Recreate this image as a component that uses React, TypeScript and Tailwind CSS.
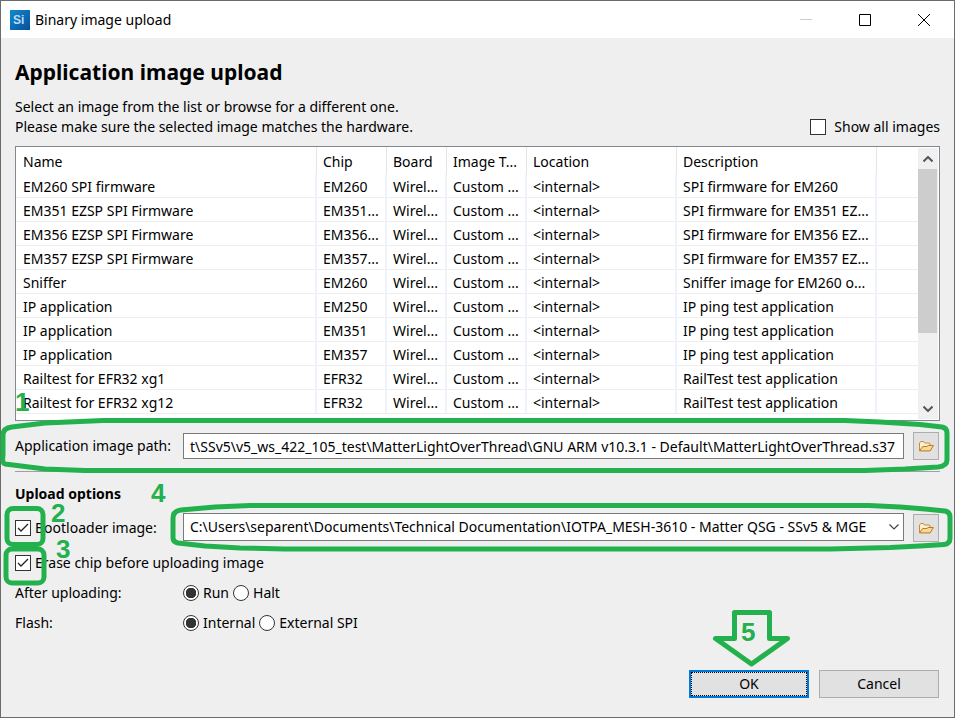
import { useState } from "react";

const columns = ["Name", "Chip", "Board", "Image T...", "Location", "Description"];

const rows = [
  ["EM260 SPI firmware", "EM260", "SPI firmware for EM260"],
  ["EM351 EZSP SPI Firmware", "EM351...", "SPI firmware for EM351 EZ..."],
  ["EM356 EZSP SPI Firmware", "EM356...", "SPI firmware for EM356 EZ..."],
  ["EM357 EZSP SPI Firmware", "EM357...", "SPI firmware for EM357 EZ..."],
  ["Sniffer", "EM260", "Sniffer image for EM260 o..."],
  ["IP application", "EM250", "IP ping test application"],
  ["IP application", "EM351", "IP ping test application"],
  ["IP application", "EM357", "IP ping test application"],
  ["Railtest for EFR32 xg1", "EFR32", "RailTest test application"],
  ["Railtest for EFR32 xg12", "EFR32", "RailTest test application"],
];

function Check({ id, defaultChecked = false }: { id: string; defaultChecked?: boolean }) {
  const [on, setOn] = useState(defaultChecked);
  return (
    <span className="grid size-4 shrink-0">
      <input
        id={id}
        type="checkbox"
        checked={on}
        onChange={() => setOn(!on)}
        className="col-start-1 row-start-1 size-4 appearance-none border border-[#333] bg-white"
      />
      {on && (
        <svg viewBox="0 0 16 16" className="pointer-events-none col-start-1 row-start-1 size-4" fill="none" stroke="#222" strokeWidth="1.3">
          <path d="M3 8l3 3 7-7" />
        </svg>
      )}
    </span>
  );
}

function Radio({ id, name, defaultChecked = false }: { id: string; name: string; defaultChecked?: boolean }) {
  return (
    <input
      id={id}
      name={name}
      type="radio"
      defaultChecked={defaultChecked}
      className="size-4 shrink-0 appearance-none rounded-full border border-[#333] bg-white checked:border-[#333] checked:bg-[radial-gradient(circle,#333_0,#333_5px,#fff_5.5px)]"
    />
  );
}

function FolderButton({ label }: { label: string }) {
  return (
    <button aria-label={label} className="flex h-7 w-[26px] shrink-0 items-center justify-center border border-[#adadad] bg-[#e1e1e1]">
      <svg viewBox="0 0 16 16" className="size-4" strokeLinejoin="round">
        <path d="M1.500 12.500V4.800L3 3.500h2.500L6.500 5h5l.5.8V8" fill="#fdf0cc" stroke="#c58a3c" />
        <path d="M1.500 12.900L4.600 8.600l4.200-.1L10.200 7.500h5.200l-3.200 5.400z" fill="#fbd995" stroke="#b9772a" />
      </svg>
    </button>
  );
}

export default function App() {
  return (
    <div className="relative flex min-h-screen flex-col border border-[#6b6b6b] bg-[#efefef] font-['Noto_Sans','Open_Sans',sans-serif] text-[14px] leading-5 text-black">
      <header className="flex h-[37px] shrink-0 items-center bg-white pr-px pl-[9px]">
        <svg viewBox="0 0 20 20" className="mr-[5px] size-5" role="img" aria-label="Simplicity Studio">
          <defs>
            <linearGradient id="logo" x1="0" y1="0" x2="1" y2="1">
              <stop offset="0" stopColor="#1389cf" />
              <stop offset="1" stopColor="#05509b" />
            </linearGradient>
          </defs>
          <rect width="20" height="20" fill="url(#logo)" />
          <text x="3" y="14" fontSize="12" fontWeight="700" fill="#b9dcf2" fontFamily="Liberation Sans, sans-serif">Si</text>
        </svg>
        <span className="flex-1">Binary image upload</span>
        <button aria-label="Minimize" disabled className="flex h-full w-[58px] items-center justify-center">
          <svg viewBox="0 0 12 12" className="size-3" stroke="#ccc"><path d="M0 5.500h12" /></svg>
        </button>
        <button aria-label="Maximize" className="flex h-full w-[59px] items-center justify-center">
          <svg viewBox="0 0 12 12" className="size-3" fill="none" stroke="#000"><path d="M.5.5h11v11H.5z" /></svg>
        </button>
        <button aria-label="Close" className="flex h-full w-[59px] items-center justify-center">
          <svg viewBox="0 0 12 12" className="size-3" fill="none" stroke="#000"><path d="M0 0l12 12M12 0L0 12" /></svg>
        </button>
      </header>

      <main className="flex flex-1 flex-col px-3.5 pt-5">
        <h1 className="text-[21px] leading-7 font-bold">Application image upload</h1>
        <div className="mt-[11px] flex items-end justify-between">
          <p>
            Select an image from the list or browse for a different one.
            <br />
            Please make sure the selected image matches the hardware.
          </p>
          <label htmlFor="all" className="flex items-center gap-2">
            <Check id="all" />
            Show all images
          </label>
        </div>

        <div className="mt-[9px] flex h-[275px] border border-[#828790] bg-white">
          <div className="min-w-0 flex-1 overflow-hidden">
            <table className="w-full table-fixed border-separate border-spacing-0 text-left whitespace-nowrap">
              <colgroup>
                <col className="w-[301px]" />
                <col className="w-[70px]" />
                <col className="w-[60px]" />
                <col className="w-[80px]" />
                <col className="w-[150px]" />
                <col className="w-[200px]" />
                <col />
              </colgroup>
              <thead>
                <tr className="h-[27px]">
                  {columns.map((c) => (
                    <th key={c} className="overflow-hidden border-r border-[#e5e5e5] py-0 pt-0.5 pl-1.5 font-normal first:pl-[7px]">{c}</th>
                  ))}
                  <td />
                </tr>
              </thead>
              <tbody>
                {rows.map(([name, chip, description], i) => (
                  <tr key={i} className="h-6">
                    {[name, chip, "Wirel...", "Custom ...", "<internal>", description].map((text, j) => (
                      <td key={j} className="overflow-hidden border-r-2 border-b border-r-[#edf2fb] border-b-[#eee] p-0 pt-0.5 pl-1.5 first:pl-[7px]">{text}</td>
                    ))}
                    <td className="border-b border-[#eee]" />
                  </tr>
                ))}
              </tbody>
            </table>
          </div>
          <div className="my-px mr-px flex w-5 shrink-0 flex-col bg-[#f0f0f0]">
            <button aria-label="Scroll up" className="flex h-[21px] items-center justify-center">
              <svg viewBox="0 0 10 6" className="h-1.5 w-2.5" fill="none" stroke="#555" strokeWidth="2"><path d="M.5 5.500L5 1l4.500 4.500" /></svg>
            </button>
            <div className="mr-px h-[164px] bg-[#cdcdcd]" />
            <div className="flex-1" />
            <button aria-label="Scroll down" className="flex h-[21px] items-center justify-center">
              <svg viewBox="0 0 10 6" className="h-1.5 w-2.5" fill="none" stroke="#555" strokeWidth="2"><path d="M.5.5L5 5 9.500.500" /></svg>
            </button>
          </div>
        </div>

        <div className="mt-[11px] flex items-center pr-px">
          <label htmlFor="path" className="w-[168px] shrink-0">Application image path:</label>
          <input
            id="path"
            className="h-[26px] min-w-0 flex-1 border border-[#7a7a7a] bg-white px-1.5"
            defaultValue={"t\\SSv5\\v5_ws_422_105_test\\MatterLightOverThread\\GNU ARM v10.3.1 - Default\\MatterLightOverThread.s37"}
          />
          <div className="ml-[9px] flex"><FolderButton label="Browse for application image" /></div>
        </div>
        <hr className="mt-[11px] border-t border-[#a0a0a0]" />

        <h2 className="mt-3 font-bold">Upload options</h2>
        <div className="mt-[9px] flex items-end pr-px">
          <label htmlFor="boot" className="flex h-7 w-[168px] shrink-0 items-center gap-1">
            <Check id="boot" defaultChecked />
            Bootloader image:
          </label>
          <div className="mb-px grid min-w-0 flex-1 items-center">
            <select aria-label="Bootloader image path" className="col-start-1 row-start-1 h-7 w-full min-w-0 appearance-none border border-[#7a7a7a] bg-white pr-6 pl-1.5">
              <option>{"C:\\Users\\separent\\Documents\\Technical Documentation\\IOTPA_MESH-3610 - Matter QSG - SSv5 & MGE"}</option>
            </select>
            <svg viewBox="0 0 10 6" className="pointer-events-none col-start-1 row-start-1 mr-[5px] h-1.5 w-2.5 justify-self-end" fill="none" stroke="#444" strokeWidth="1.2"><path d="M.5.5L5 5 9.500.500" /></svg>
          </div>
          <div className="ml-[9px] flex"><FolderButton label="Browse for bootloader image" /></div>
        </div>
        <label htmlFor="erase" className="mt-[11px] flex items-center gap-1 self-start">
          <Check id="erase" defaultChecked />
          Erase chip before uploading image
        </label>
        <div role="radiogroup" aria-label="After uploading" className="mt-2.5 flex items-center">
          <span className="w-[168px]">After uploading:</span>
          <label htmlFor="run" className="flex items-center gap-1"><Radio id="run" name="after" defaultChecked />Run</label>
          <label htmlFor="halt" className="ml-1 flex items-center gap-1"><Radio id="halt" name="after" />Halt</label>
        </div>
        <div role="radiogroup" aria-label="Flash" className="mt-2.5 flex items-center">
          <span className="w-[168px]">Flash:</span>
          <label htmlFor="internal" className="flex items-center gap-1"><Radio id="internal" name="flash" defaultChecked />Internal</label>
          <label htmlFor="spi" className="ml-1 flex items-center gap-1"><Radio id="spi" name="flash" />External SPI</label>
        </div>
        <div className="mt-auto mb-[19px] flex justify-end gap-2.5 pr-px">
          <button className="h-7 w-[120px] border-2 border-[#0078d7] bg-[#e1e1e1]">
            <span className="flex h-full items-center justify-center border border-dotted border-black">OK</span>
          </button>
          <button className="h-7 w-[120px] border border-[#adadad] bg-[#e1e1e1]">Cancel</button>
        </div>
      </main>

      <svg viewBox="0 0 955 718" className="pointer-events-none absolute -top-px -left-px h-[718px] w-[955px]" fill="none" stroke="#22b14c" strokeWidth="5" strokeLinejoin="round" strokeLinecap="round">
        <path d="M103 420.500H845L880 422 920 424.500 942 427Q947 428 947 433V460Q947 466 938 467L905 469 865 470.500H85L45 469 5 464Q2 463 3 455V435Q3 428 12 427L45 423z" />
        <path d="M250 505.500H869L900 507 925 509 945 511Q950 512 950 517V538Q950 544 944 544.500L920 546 890 547.500 830 549H285L240 548 205 546 178 543Q173 542 173 538V518Q173 511 181 510L215 507z" />
        <rect x="7" y="508.500" width="36" height="36" rx="6" />
        <rect x="6" y="549" width="38" height="34" rx="6" />
        <path d="M734.500 612.500h35v26h18L751.500 664 715.500 638.500h19z" />
        <g fill="#22b14c" stroke="none" fontSize="26" fontWeight="700" fontFamily="Liberation Sans, Arial, sans-serif">
          <text x="15" y="411">1</text>
          <text x="51" y="522">2</text>
          <text x="56" y="558">3</text>
          <text x="151" y="502">4</text>
          <text x="741" y="641">5</text>
        </g>
      </svg>
    </div>
  );
}
